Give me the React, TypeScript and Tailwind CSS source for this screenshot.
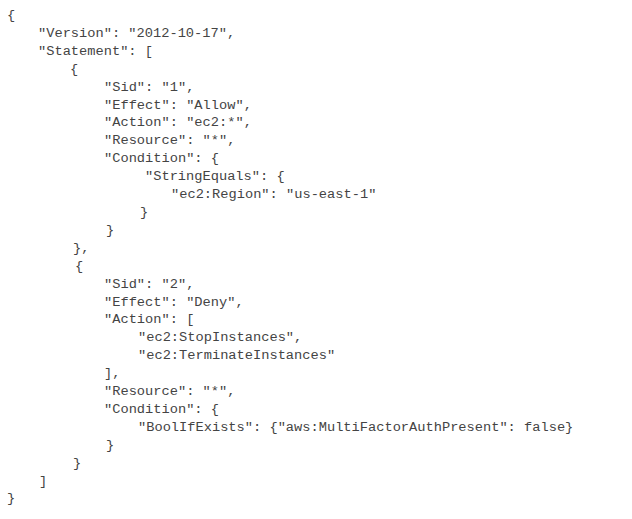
import React from "react";

type Line = { indent: number; text: string };

const lines: Line[] = [
  { indent: 7, text: "{" },
  { indent: 38, text: '"Version": "2012-10-17",' },
  { indent: 38, text: '"Statement": [' },
  { indent: 70, text: "{" },
  { indent: 104, text: '"Sid": "1",' },
  { indent: 104, text: '"Effect": "Allow",' },
  { indent: 104, text: '"Action": "ec2:*",' },
  { indent: 104, text: '"Resource": "*",' },
  { indent: 104, text: '"Condition": {' },
  { indent: 145, text: '"StringEquals": {' },
  { indent: 171, text: '"ec2:Region": "us-east-1"' },
  { indent: 140, text: "}" },
  { indent: 106, text: "}" },
  { indent: 73, text: "}," },
  { indent: 75, text: "{" },
  { indent: 104, text: '"Sid": "2",' },
  { indent: 104, text: '"Effect": "Deny",' },
  { indent: 104, text: '"Action": [' },
  { indent: 138, text: '"ec2:StopInstances",' },
  { indent: 138, text: '"ec2:TerminateInstances"' },
  { indent: 104, text: "]," },
  { indent: 104, text: '"Resource": "*",' },
  { indent: 104, text: '"Condition": {' },
  { indent: 138, text: '"BoolIfExists": {"aws:MultiFactorAuthPresent": false}' },
  { indent: 106, text: "}" },
  { indent: 73, text: "}" },
  { indent: 39, text: "]" },
  { indent: 7, text: "}" },
];

export default function App() {
  return (
    <div className="w-[632px] h-[519px] bg-white overflow-hidden pt-[7px]">
      <div className="flex flex-col font-mono text-[13.7px] leading-[17.9px] text-[#444444]">
        {lines.map((l, i) => (
          <div key={i} className="whitespace-pre" style={{ paddingLeft: l.indent }}>
            {l.text}
          </div>
        ))}
      </div>
    </div>
  );
}
